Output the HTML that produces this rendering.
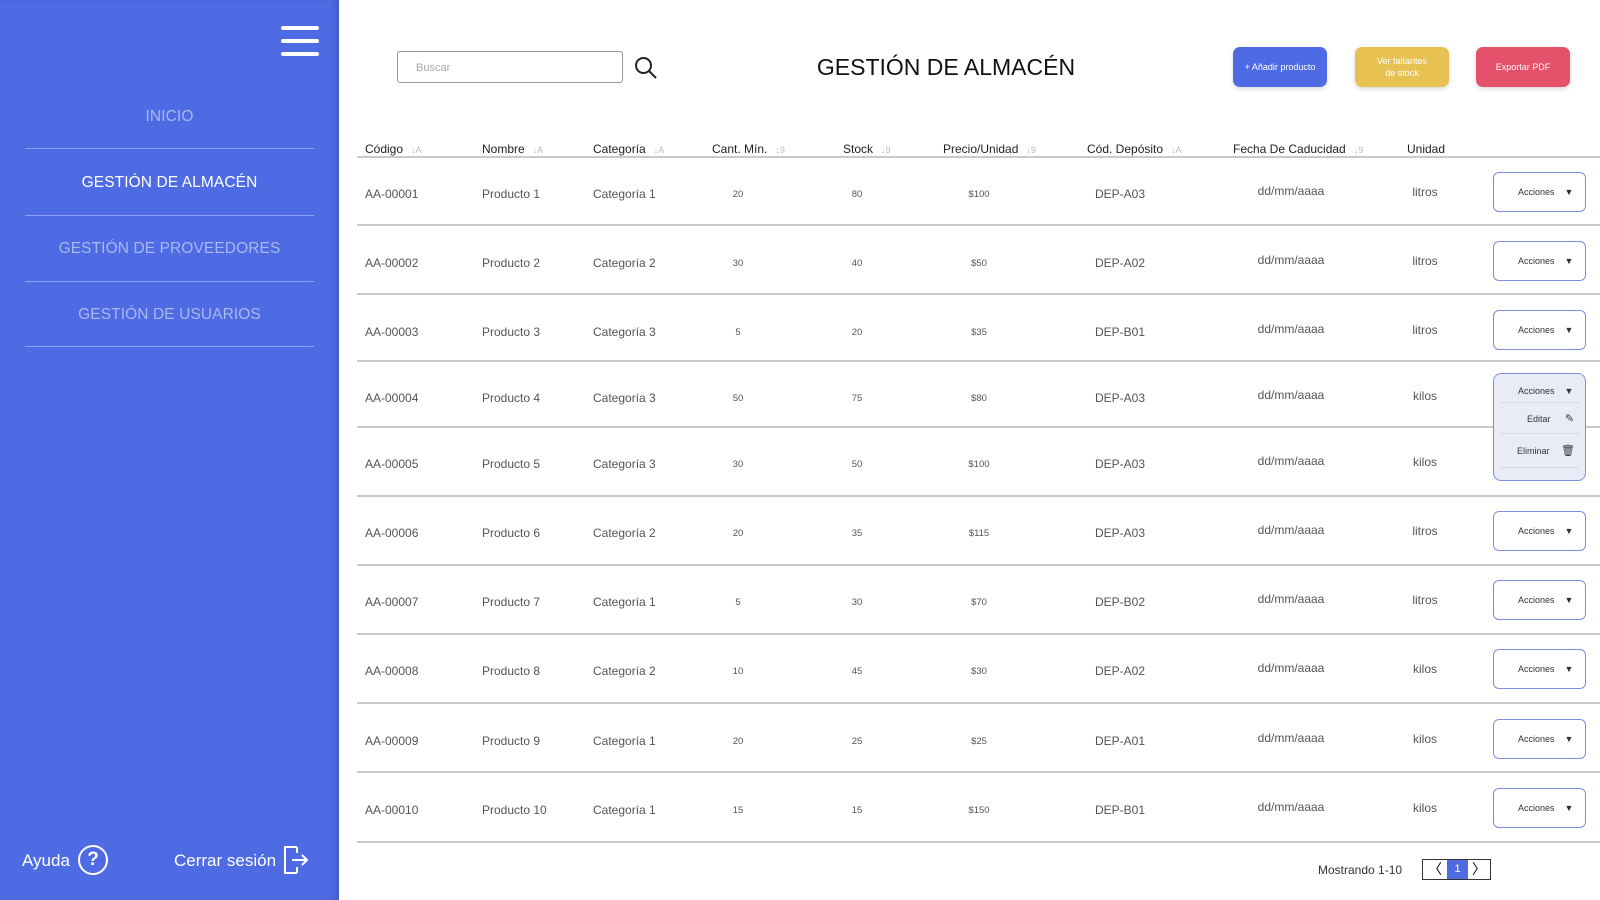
<!DOCTYPE html>
<html><head><meta charset="utf-8"><style>
*{margin:0;padding:0;box-sizing:border-box}
body{width:1600px;height:900px;overflow:hidden;background:#fff;font-family:"Liberation Sans","DejaVu Sans",sans-serif;position:relative}
.side{position:absolute;left:0;top:0;width:339px;height:900px;background:#4f6be3;box-shadow:inset -6px 0 8px -4px rgba(0,0,0,.2)}
.ham{position:absolute;left:281px;width:38px;height:4px;border-radius:2px;background:#fff}
.nav{position:absolute;left:25px;width:289px;text-align:center;font-size:15.5px;color:#a9b7f2;letter-spacing:.1px}
.div{position:absolute;left:25px;width:289px;height:1px;background:#8ea0ee}
.a{position:absolute;font-size:12px;color:#555;white-space:nowrap}
.n{font-size:9.5px}
.h{position:absolute;top:142px;font-size:12px;color:#222;white-space:nowrap}
.s{display:inline-block;color:#bbb;font-size:9px;margin-left:8px}
.line{position:absolute;left:357px;right:0;height:2px;background:#c9c9c9}
.act{position:absolute;left:1493px;width:93px;height:40px;border:1px solid #7d8fe0;border-radius:6px;font-size:9px;color:#333;line-height:38px;padding-left:24px;background:#fff}
.btn{position:absolute;top:47px;height:40px;width:94px;border-radius:7px;color:#fff;font-size:9px;text-align:center;display:flex;align-items:center;justify-content:center;line-height:12px;box-shadow:0 2px 4px rgba(0,0,0,.15)}
</style></head><body>
<div class="side">
<div class="ham" style="top:26px"></div><div class="ham" style="top:39px"></div><div class="ham" style="top:52px"></div>
<div class="nav" style="top:108px">INICIO</div><div class="div" style="top:148px"></div>
<div class="nav" style="top:174px;color:#fff">GESTIÓN DE ALMACÉN</div><div class="div" style="top:215px"></div>
<div class="nav" style="top:240px">GESTIÓN DE PROVEEDORES</div><div class="div" style="top:281px"></div>
<div class="nav" style="top:306px">GESTIÓN DE USUARIOS</div><div class="div" style="top:346px"></div>
<div style="position:absolute;left:22px;top:851px;color:#fff;font-size:17px">Ayuda</div>
<div style="position:absolute;left:78px;top:845px;width:30px;height:30px;border:2px solid #fff;border-radius:50%;color:#fff;font-size:19px;text-align:center;line-height:26px;font-weight:bold">?</div>
<div style="position:absolute;left:174px;top:851px;color:#fff;font-size:17px">Cerrar sesión</div>
<svg style="position:absolute;left:284px;top:846px" width="24" height="28" viewBox="0 0 24 28" fill="none" stroke="#fff" stroke-width="2"><path d="M13 1H1v26h12M13 1v6M13 27v-6M8 14h15M18 9l5 5-5 5"/></svg>
</div>

<div style="position:absolute;left:397px;top:51px;width:226px;height:32px;border:1px solid #999;border-radius:3px;font-size:11px;color:#aaa;padding:10px 18px">Buscar</div>
<svg style="position:absolute;left:634px;top:56px" width="24" height="24" viewBox="0 0 24 24" fill="none" stroke="#222" stroke-width="2"><circle cx="9.5" cy="9.5" r="7.5"/><path d="M15 15l7 7"/></svg>
<div style="position:absolute;left:746px;width:400px;text-align:center;top:54px;font-size:23px;color:#111">GESTIÓN DE ALMACÉN</div>
<div class="btn" style="left:1233px;background:#4f6be3">+ Añadir producto</div>
<div class="btn" style="left:1355px;background:#e8c153">Ver faltantes<br>de stock</div>
<div class="btn" style="left:1476px;background:#e5506b">Exportar PDF</div>

<div class="h" style="left:365px">Código<span class="s">↓A</span></div>
<div class="h" style="left:482px">Nombre<span class="s">↓A</span></div>
<div class="h" style="left:593px">Categoría<span class="s">↓A</span></div>
<div class="h" style="left:712px">Cant. Mín.<span class="s">↓9</span></div>
<div class="h" style="left:843px">Stock<span class="s">↓9</span></div>
<div class="h" style="left:943px">Precio/Unidad<span class="s">↓9</span></div>
<div class="h" style="left:1087px">Cód. Depósito<span class="s">↓A</span></div>
<div class="h" style="left:1233px">Fecha De Caducidad<span class="s">↓9</span></div>
<div class="h" style="left:1407px">Unidad</div>
<div class="line" style="top:156px"></div>

<div id="rows"></div>
<script>
var d=[[1,1,20,80,100,'A03','litros'],[2,2,30,40,50,'A02','litros'],[3,3,5,20,35,'B01','litros'],[4,3,50,75,80,'A03','kilos'],[5,3,30,50,100,'A03','kilos'],[6,2,20,35,115,'A03','litros'],[7,1,5,30,70,'B02','litros'],[8,2,10,45,30,'A02','kilos'],[9,1,20,25,25,'A01','kilos'],[10,1,15,15,150,'B01','kilos']];
var ys=[194,263,332,398,464,533,602,671,741,810],ls=[224,293,360,426,495,564,633,702,771,841],h='';
d.forEach(function(r,i){var y=ys[i]-7;var c=function(x,t,cl,w,dy){return '<div class="a '+(cl||'')+'" style="left:'+x+'px;top:'+(y+(dy||0))+'px'+(w?';width:80px;text-align:center':'')+'">'+t+'</div>'};
h+=c(365,'AA-'+('0000'+r[0]).slice(-5))+c(482,'Producto '+r[0])+c(593,'Categoría '+r[1])+c(698,r[2],'n',1,2)+c(817,r[3],'n',1,2)+c(939,'$'+r[4],'n',1,2)+c(1080,'DEP-'+r[5],'',1)+c(1251,'dd/mm/aaaa','',1,-3)+c(1385,r[6],'',1,-2);
h+='<div class="line" style="top:'+ls[i]+'px"></div>';
if(i!=3&&i!=4)h+='<div class="act" style="top:'+(ys[i]-22)+'px">Acciones &nbsp;&nbsp;&nbsp;▼</div>';});
document.getElementById('rows').innerHTML=h;
</script>
<div style="position:absolute;left:1493px;top:373px;width:93px;height:108px;border:1px solid #7d8fe0;border-radius:8px;background:#e9ecf7;font-size:9px;color:#333">
<div style="padding:12px 0 0 24px">Acciones &nbsp;&nbsp;&nbsp;▼</div>
<div style="margin:6px 6px 0;border-top:1px solid #d6d9e6;padding:9px 0 0 27px">Editar <span style="margin-left:12px;font-size:11px">✎</span></div>
<div style="margin:8px 6px 0;border-top:1px solid #d6d9e6;padding:10px 0 0 17px">Eliminar <span style="margin-left:9px;font-size:11px">🗑</span></div>
<div style="margin:10px 6px 0;border-top:1px solid #d6d9e6"></div>
</div>

<div style="position:absolute;left:1318px;top:863px;font-size:12px;color:#333">Mostrando 1-10</div>
<div style="position:absolute;left:1422px;top:859px;width:69px;height:21px;border:1px solid #333;display:flex">
<div style="width:24px;text-align:center;font-size:14px;line-height:19px">〈</div>
<div style="width:21px;background:#4f6be3;color:#fff;font-size:11px;text-align:center;line-height:19px">1</div>
<div style="width:22px;text-align:center;font-size:14px;line-height:19px">〉</div>
</div>
</body></html>
